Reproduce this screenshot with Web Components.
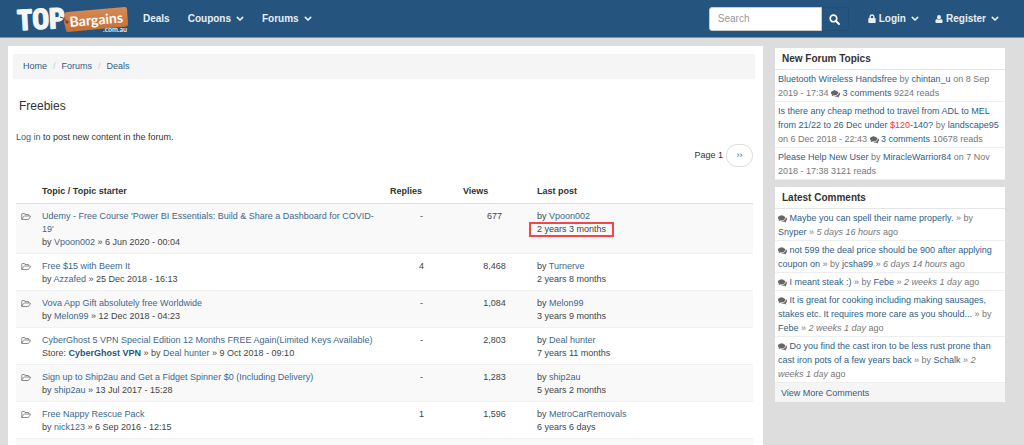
<!DOCTYPE html>
<html lang="en">
<head>
<meta charset="utf-8">
<meta name="viewport" content="width=device-width, initial-scale=1">
<title>Freebies | TopBargains</title>
<style>
  html { background: #ddd; }
  body {
    margin: 0;
    font: 9px/13px "Liberation Sans", Arial, sans-serif;
    color: #333;
    --link: #2f5e87;
    --bar: #25557e;
  }
</style>
</head>
<body>
<forum-app></forum-app>

<script>
const define = (name, html, setup) => {
  const tpl = document.createElement('template');
  tpl.innerHTML = html;
  customElements.define(name, class extends HTMLElement {
    constructor() {
      super();
      this.attachShadow({ mode: 'open' }).append(tpl.content.cloneNode(true));
    }
    connectedCallback() { if (setup) setup(this, this.shadowRoot); }
  });
};

const linkCss = 'a { color: var(--link); text-decoration: none; } a:hover { text-decoration: underline; }';

const icons = {
  comments: ['0 0 1792 1792', '<path d="M1408 768q0 139-94 257t-256.500 186.500-353.500 68.500q-86 0-176-16-124 88-278 128-36 9-86 16h-3q-11 0-20.500-8t-11.500-21q-1-3-1-6.500t.5-6.500 2-6l2.500-5 3.500-5.500 4-5 4.500-5 4-4.500q5-6 23-25t26-29.500 22.500-29 25-38.500 20.500-44q-124-72-195-177t-71-224q0-139 94-257t256.500-186.500 353.500-68.500 353.500 68.500 256.500 186.500 94 257zm384 256q0 120-71 224.500t-195 176.500q10 24 20.500 44t25 38.500 22.500 29 26 29.500 23 25q1 1 4 4.500t4.500 5 4 5 3.500 5.500l2.500 5 2 6 .5 6.500-1 6.500q-3 14-13 22t-22 7q-50-7-86-16-154-40-278-128-90 16-176 16-271 0-472-132 58 4 88 4 161 0 309-45t264-129q125-92 192-212t67-254q0-77-23-152 129 71 204 178t75 230z"/>'],
  folder: ['0 0 20 14', '<path d="M1.500 12V2.500Q1.500 1 3 1h3.500q1.200 0 1.500 1.200V3h6q1.500 0 1.500 1.500V6M1.500 12.500 5 7.200Q5.700 6 7 6h11.500q1 .2.400 1.200l-3 4.600Q15 13 13.800 13H2.500q-1.200 0-1-1z" fill="none" stroke="currentColor" stroke-width="1.500"/>'],
  search: ['0 0 16 16', '<circle cx="6.500" cy="6.500" r="4.800" fill="none" stroke="currentColor" stroke-width="2.400"/><path d="m10.200 10.200 4.300 4.300" stroke="currentColor" stroke-width="2.800" stroke-linecap="round"/>'],
  lock: ['0 0 12 14', '<path d="M3.200 7V4.300a2.800 2.800 0 0 1 5.600 0V7" fill="none" stroke="currentColor" stroke-width="2"/><rect x=".5" y="6" width="11" height="7.500" rx="1"/>'],
  user: ['0 0 14 14', '<ellipse cx="7" cy="4" rx="3.400" ry="4"/><path d="M3.500 7Q.5 7.500.5 11.500.5 14 2.500 14h9q2 0 2-2.500Q13.500 7.500 10.500 7 7 10 3.500 7z"/>'],
  chevron: ['0 0 12 8', '<path d="m2 2 4 4 4-4" fill="none" stroke="currentColor" stroke-width="2.400" stroke-linecap="round"/>']
};

define('ui-icon', `
  <style>
    :host { display: inline-block; width: 10px; line-height: 0; vertical-align: middle; }
    svg { display: block; width: 100%; height: auto; fill: currentColor; }
  </style>
  <svg aria-hidden="true"></svg>`, (host, root) => {
  const [box, body] = icons[host.getAttribute('name')];
  const svg = root.querySelector('svg');
  svg.setAttribute('viewBox', box);
  svg.innerHTML = body;
});

define('site-logo', `
  <style>
    :host { display: block; }
    a, svg { display: block; }
    svg { overflow: visible; }
  </style>
  <a href="#" aria-label="TopBargains home">
    <svg width="114" height="34" viewBox="0 1 114 34">
      <defs>
        <linearGradient id="tag" x1="0" y1="0" x2="0" y2="1">
          <stop offset="0" stop-color="#d98a55"/><stop offset="1" stop-color="#c26f35"/>
        </linearGradient>
      </defs>
      <path d="M52 11 110 6Q112 6 112 8L113 23Q113 25 111 25.500L53 31Q51 31 51 29L49 21 50 13Q50 11 52 11z" fill="url(#tag)"/>
      <g transform="rotate(-3 24 16)" fill="#f4f5f6" stroke="#f4f5f6" stroke-width="1.500" stroke-linejoin="round"
         font-family="'Liberation Sans Narrow','Roboto Condensed','DejaVu Sans Condensed',Roboto,sans-serif" font-weight="700" font-size="28">
        <text x="2" y="28">T</text><text x="17" y="28">O</text><text x="34" y="28">P</text>
      </g>
      <circle cx="52" cy="21" r="1.500" fill="#743d1b"/>
      <path d="M45 16Q49 16 52 21" fill="none" stroke="#743d1b"/>
      <text x="55" y="26" transform="rotate(-5 55 26)" fill="#fff" font-family="Lato,sans-serif" font-weight="700" font-size="14">Bargains</text>
      <text x="88" y="31" fill="#e4edf4" font-family="Lato,sans-serif" font-weight="700" font-size="7">.com.au</text>
    </svg>
  </a>`);

define('nav-link', `
  <style>
    :host { display: block; }
    a { display: flex; align-items: center; gap: 3px; color: #e9eef3; font: bold 10px/14px "Liberation Sans", Arial, sans-serif; text-decoration: none; white-space: nowrap; }
    .lead { width: 8px; }
    .down { width: 8px; margin-left: 2px; }
  </style>
  <a href="#"><slot></slot></a>`, (host, root) => {
  const a = root.querySelector('a');
  const lead = host.getAttribute('icon');
  if (lead && !root.querySelector('.lead')) a.insertAdjacentHTML('afterbegin', `<ui-icon class="lead" name="${lead}"></ui-icon>`);
  if (host.hasAttribute('menu') && !root.querySelector('.down')) a.insertAdjacentHTML('beforeend', '<ui-icon class="down" name="chevron"></ui-icon>');
});

define('search-box', `
  <style>
    :host { display: block; }
    form { display: flex; height: 24px; margin: 0; }
    input { box-sizing: border-box; width: 113px; padding: 0 8px; border: 1px solid #ccc; border-radius: 3px 0 0 3px; background: #fff; color: #333; font: 10px/14px "Liberation Sans", Arial, sans-serif; }
    input::placeholder { color: #999; opacity: 1; }
    button { width: 27px; padding: 0; border: 1px solid #224e74; border-left: 0; border-radius: 0 3px 3px 0; background: transparent; color: #fff; }
    ui-icon { width: 11px; }
  </style>
  <form role="search">
    <input type="text" aria-label="Search" placeholder="Search"><button type="button" aria-label="Search"><ui-icon name="search"></ui-icon></button>
  </form>`);

define('top-bar', `
  <style>
    :host { display: block; background: var(--bar); border-bottom: 1px solid #7e97ad; }
    header { display: flex; align-items: center; flex-wrap: wrap; min-height: 37px; box-sizing: border-box; padding: 0 25px 0 15px; }
    nav { display: flex; gap: 18px; }
    .main { margin-left: 14px; }
    .account { gap: 16px; margin-left: 19px; }
    search-box { margin-left: auto; }
  </style>
  <header>
    <site-logo></site-logo>
    <nav class="main" aria-label="Main">
      <nav-link>Deals</nav-link><nav-link menu>Coupons</nav-link><nav-link menu>Forums</nav-link>
    </nav>
    <search-box></search-box>
    <nav class="account" aria-label="Account">
      <nav-link icon="lock" menu>Login</nav-link><nav-link icon="user" menu>Register</nav-link>
    </nav>
  </header>`);

define('bread-crumbs', `
  <style>
    :host { display: block; }
    ol { display: flex; margin: 0; padding: 6px 10px; background: #f5f5f5; list-style: none; }
    li + li::before { content: "/"; padding: 0 6px; color: #ccc; }
    ${linkCss}
  </style>
  <nav aria-label="Breadcrumb"><ol>
    <li><a href="#">Home</a></li><li><a href="#">Forums</a></li><li><a href="#">Deals</a></li>
  </ol></nav>`);

define('page-nav', `
  <style>
    :host { display: flex; justify-content: flex-end; align-items: center; gap: 3px; }
    a { box-sizing: border-box; width: 27px; padding: 4px 0; border: 1px solid #ddd; border-radius: 11px; text-align: center; }
    ${linkCss}
  </style>
  <span>Page 1</span><a href="#" aria-label="Next page">››</a>`);

const topics = [
  ["Udemy - Free Course 'Power BI Essentials: Build &amp; Share a Dashboard for COVID-19'", '', 'Vpoon002', '6 Jun 2020 - 00:04', '-', '677', 'Vpoon002', '2 years 3 months', true],
  ['Free $15 with Beem It', '', 'Azzafed', '25 Dec 2018 - 16:13', '4', '8,468', 'Turnerve', '2 years 8 months'],
  ['Vova App Gift absolutely free Worldwide', '', 'Melon99', '12 Dec 2018 - 04:23', '-', '1,084', 'Melon99', '3 years 9 months'],
  ['CyberGhost 5 VPN Special Edition 12 Months FREE Again(Limited Keys Available)', 'CyberGhost VPN', 'Deal hunter', '9 Oct 2018 - 09:10', '-', '2,803', 'Deal hunter', '7 years 11 months'],
  ['Sign up to Ship2au and Get a Fidget Spinner $0 (Including Delivery)', '', 'ship2au', '13 Jul 2017 - 15:28', '-', '1,283', 'ship2au', '5 years 2 months'],
  ['Free Nappy Rescue Pack', '', 'nick123', '6 Sep 2016 - 12:15', '1', '1,596', 'MetroCarRemovals', '6 years 6 days']
];

define('topic-table', `
  <style>
    :host { display: block; }
    table { width: 100%; table-layout: fixed; border-collapse: separate; border-spacing: 0; }
    th, td { padding: 5px; text-align: left; vertical-align: top; }
    th { border-bottom: 1px solid #ddd; }
    td { padding-top: 6px; padding-bottom: 4px; border-bottom: 1px solid #f1f1f1; color: #444; }
    tbody tr:nth-child(odd) { background: #f9f9f9; }
    .icon { width: 11px; color: #666; }
    .count { width: 63px; }
    .last { width: 211px; padding-left: 6px; }
    td.count { text-align: center; }
    td.topic { padding-right: 8px; }
    .next td { padding: 3px; border: 0; }
    .mark { position: relative; }
    .mark::after { content: ""; position: absolute; inset: -2px -8px -3px -8px; border: 2px solid #f4474c; }
    ${linkCss}
    td a { color: #3c688f; }
    b { color: #25557e; }
  </style>
  <table>
    <thead><tr><th class="icon"></th><th>Topic / Topic starter</th><th class="count">Replies</th><th class="count">Views</th><th class="last">Last post</th></tr></thead>
    <tbody>${topics.map(([title, store, by, date, replies, views, last, age, mark]) => `
      <tr>
        <td class="icon"><ui-icon name="folder"></ui-icon></td>
        <td class="topic"><a href="#">${title}</a><br>${store ? `Store: <a href="#"><b>${store}</b></a> » ` : ''}by <a href="#">${by}</a> » ${date}</td>
        <td class="count">${replies}</td>
        <td class="count">${views}</td>
        <td class="last">by <a href="#">${last}</a><br><span${mark ? ' class="mark"' : ''}>${age}</span></td>
      </tr>`).join('')}
      <tr class="next" aria-hidden="true"><td colspan="5"></td></tr>
    </tbody>
  </table>`);

define('side-panel', `
  <style>
    :host { display: block; background: #fff; color: #777; }
    h2 { margin: 0; padding: 4px 7px 3px; border-bottom: 1px solid #e5e5e5; color: #333; font: bold 10px/14px "Liberation Sans", Arial, sans-serif; }
  </style>
  <section><h2><slot name="title"></slot></h2><slot></slot></section>`);

define('side-bar', `
  <style>
    :host { display: grid; gap: 7px; align-content: start; }
    ul { margin: 0; padding: 0; list-style: none; line-height: 14px; }
    li { padding: 2px 3px 1px; border-bottom: 1px solid #eee; }
    ui-icon { width: 9px; color: #666; }
    .price { color: #f33; }
    .more { padding: 3px 6px 2px; background: #f5f5f5; line-height: 14px; }
    ${linkCss}
  </style>
  <side-panel>
    <span slot="title">New Forum Topics</span>
    <ul>
      <li><a href="#">Bluetooth Wireless Handsfree</a> by <a href="#">chintan_u</a> on 8 Sep 2019 - 17:34 <ui-icon name="comments"></ui-icon> <a href="#">3 comments</a> 9224 reads</li>
      <li><a href="#">Is there any cheap method to travel from ADL to MEL from 21/22 to 26 Dec under <span class="price">$120</span>-140?</a> by <a href="#">landscape95</a> on 6 Dec 2018 - 22:43 <ui-icon name="comments"></ui-icon> <a href="#">3 comments</a> 10678 reads</li>
      <li><a href="#">Please Help New User</a> by <a href="#">MiracleWarrior84</a> on 7 Nov 2018 - 17:38 3121 reads</li>
    </ul>
  </side-panel>
  <side-panel>
    <span slot="title">Latest Comments</span>
    <ul>
      <li><ui-icon name="comments"></ui-icon> <a href="#">Maybe you can spell their name properly.</a> » by <a href="#">Snyper</a> » <em>5 days 16 hours</em> ago</li>
      <li><ui-icon name="comments"></ui-icon> <a href="#">not 599 the deal price should be 900 after applying coupon on</a> » by <a href="#">jcsha99</a> » <em>6 days 14 hours</em> ago</li>
      <li><ui-icon name="comments"></ui-icon> <a href="#">I meant steak :)</a> » by <a href="#">Febe</a> » <em>2 weeks 1 day</em> ago</li>
      <li><ui-icon name="comments"></ui-icon> <a href="#">It is great for cooking including making sausages, stakes etc. It requires more care as you should...</a> » by <a href="#">Febe</a> » <em>2 weeks 1 day</em> ago</li>
      <li><ui-icon name="comments"></ui-icon> <a href="#">Do you find the cast iron to be less rust prone than cast iron pots of a few years back</a> » by <a href="#">Schalk</a> » <em>2 weeks 1 day</em> ago</li>
    </ul>
    <div class="more"><a href="#">View More Comments</a></div>
  </side-panel>`);

define('forum-app', `
  <style>
    :host { display: block; }
    .page { display: grid; grid-template-columns: minmax(0, 1fr) 230px; gap: 12px; padding: 8px 19px 0 8px; }
    main { padding: 8px 8px 0 5px; background: #fff; }
    .body { padding: 0 2px 0 3px; }
    h1 { margin: 19px 3px 17px; font: 12px/16px "Liberation Sans", Arial, sans-serif; }
    p { margin: 0; }
    topic-table { margin-top: 13px; }
    side-bar { margin-top: 2px; }
    ${linkCss}
    @media (max-width: 700px) { .page { grid-template-columns: minmax(0, 1fr); padding-right: 8px; } }
  </style>
  <top-bar></top-bar>
  <div class="page">
    <main>
      <bread-crumbs></bread-crumbs>
      <div class="body">
        <h1>Freebies</h1>
        <p><a href="#">Log in</a> to post new content in the forum.</p>
        <page-nav></page-nav>
        <topic-table></topic-table>
      </div>
    </main>
    <side-bar></side-bar>
  </div>`);
</script>
</body>
</html>
